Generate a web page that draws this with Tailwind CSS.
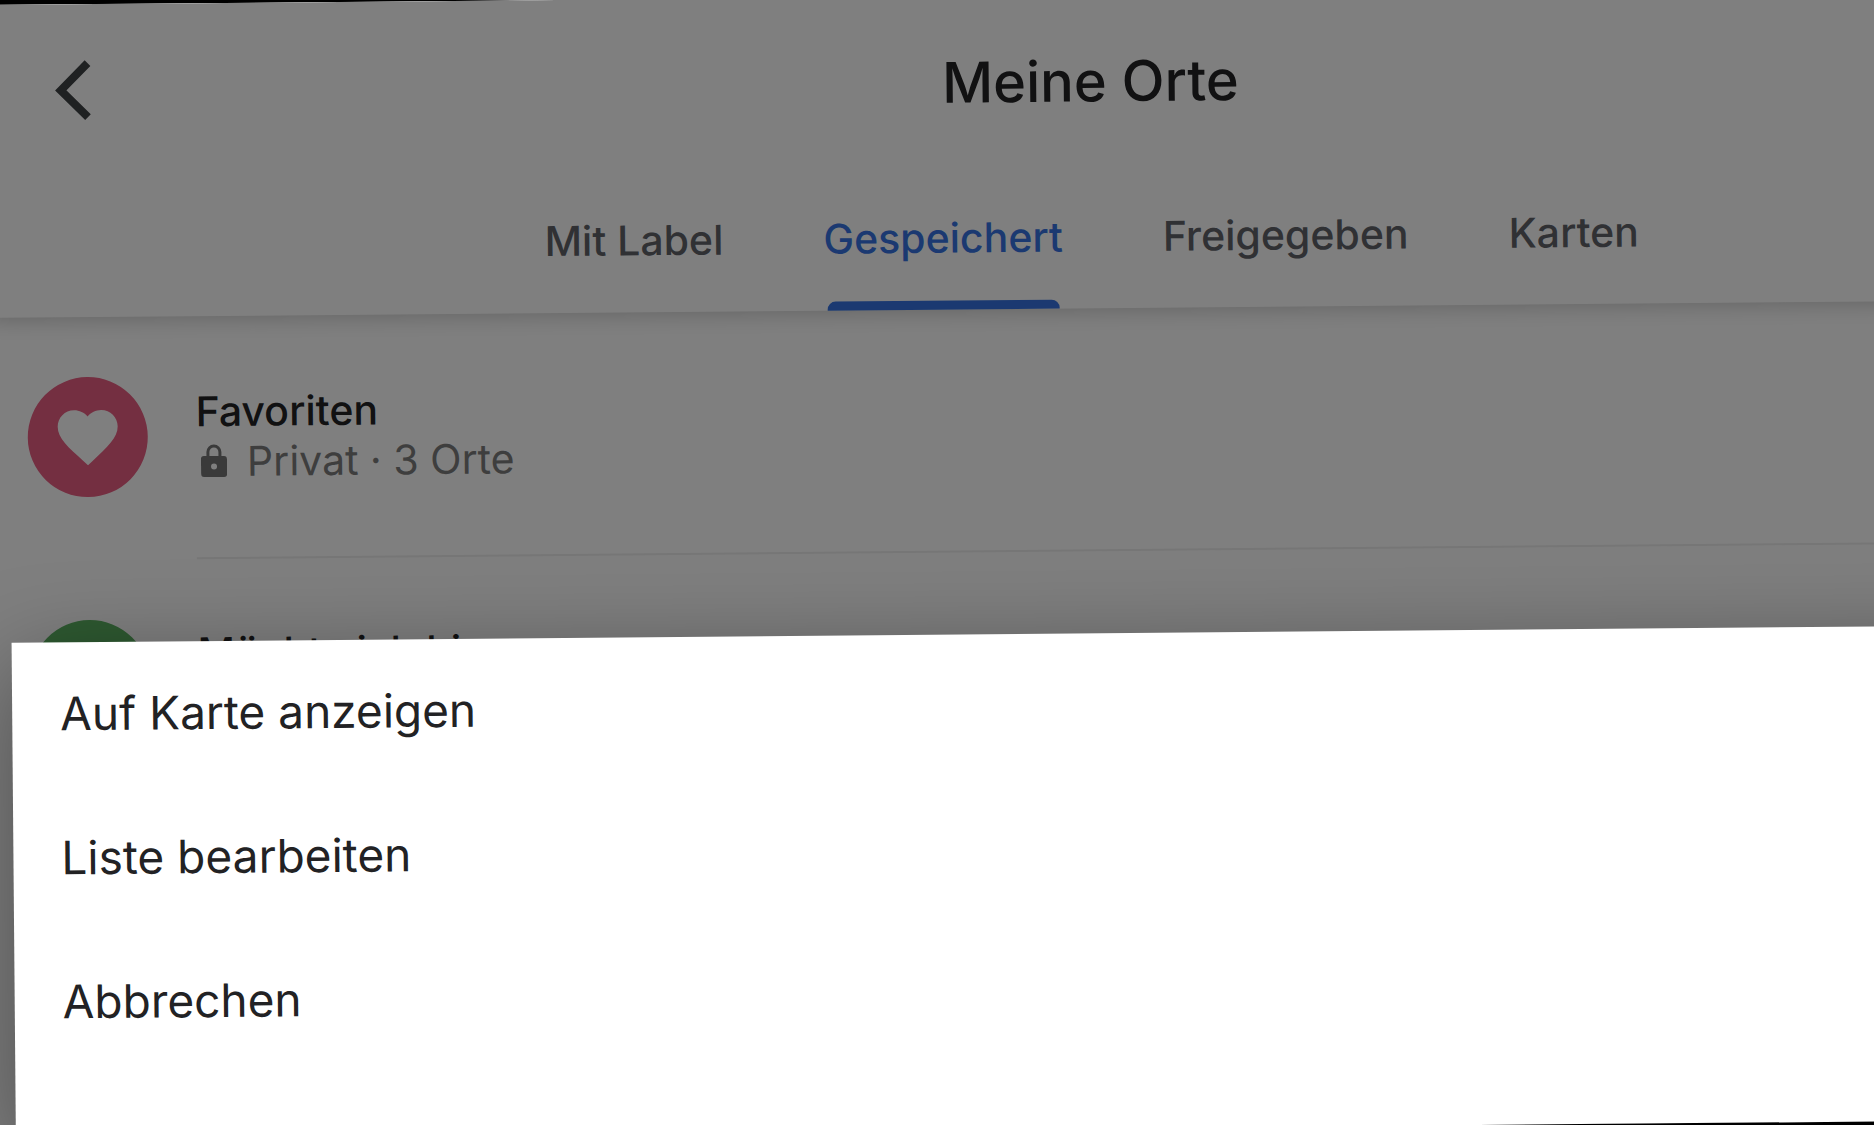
<!DOCTYPE html>
<html lang="de">
<head>
    <meta charset="UTF-8">
    <meta name="viewport" content="width=device-width, initial-scale=1.0">
    <title>Meine Orte</title>
    <script src="https://cdn.jsdelivr.net/npm/@tailwindcss/browser@4"></script>
</head>
<body class="bg-black font-['Inter','Liberation_Sans',sans-serif]">
    <div class="h-screen overflow-hidden pt-[5px]">
        <!-- Tilted app screen, runs past the right edge -->
        <div class="relative -ml-4 w-[118%] h-[calc(100%+13px)] origin-top-left rotate-[-0.5deg] bg-white overflow-hidden">
            <!-- Header -->
            <header class="relative h-[313px] flex flex-col bg-white shadow-[0_0_24px_rgba(0,0,0,0.25)]">
                <div class="relative h-[172px] flex items-center justify-center">
                    <button type="button" aria-label="Zurück" class="absolute left-[68px] top-[53px]">
                        <svg class="w-[40px] h-[64px]" viewBox="0 0 40 64" fill="none" stroke="#3e4244" stroke-width="8">
                            <path d="M35 6 L8 33 L35 60" />
                        </svg>
                    </button>
                    <h1 class="text-[56px] leading-[72px] font-medium text-[#222224]">Meine Orte</h1>
                </div>
                <nav class="flex-1 flex justify-center gap-[100px] text-[41px] leading-[48px] font-medium text-[#606268]">
                    <a href="#label" class="pt-[45px]">Mit Label</a>
                    <a href="#gespeichert" class="flex flex-col justify-between pt-[45px] text-[#3673e2]">
                        Gespeichert
                        <span class="mx-1 h-[9px] rounded-t-lg bg-[#3673e2]"></span>
                    </a>
                    <a href="#freigegeben" class="pt-[45px]">Freigegeben</a>
                    <a href="#karten" class="pt-[45px]">Karten</a>
                </nav>
            </header>

            <!-- Lists -->
            <main>
                <ul>
                    <li class="h-[243px] flex items-start gap-[48px] pl-[40px]">
                        <span class="mt-[60px] size-[120px] shrink-0 flex items-center justify-center rounded-full bg-[#e85e82]">
                            <svg class="size-[72px]" viewBox="0 0 24 24" fill="#fff">
                                <path d="M12 21.35l-1.45-1.32C5.4 15.36 2 12.28 2 8.5 2 5.42 4.42 3 7.5 3c1.74 0 3.41.81 4.5 2.09C13.09 3.81 14.76 3 16.5 3 19.58 3 22 5.42 22 8.5c0 3.78-3.4 6.86-8.55 11.54L12 21.35z" />
                            </svg>
                        </span>
                        <div class="h-full flex-1 flex flex-col justify-center pb-[2px] border-b-2 border-[#ececec]">
                            <h2 class="text-[41px] leading-[50px] font-medium text-[#222224]">Favoriten</h2>
                            <p class="flex items-center gap-[20px] pl-[5px] text-[41px] leading-[50px] text-[#7c7c7c]">
                                <svg class="w-[26px] h-[34px]" viewBox="0 0 26 34" fill="none">
                                    <path d="M7 13 V8 a6 6 0 0 1 12 0 V13" stroke="#747474" stroke-width="3" />
                                    <path fill-rule="evenodd" fill="#747474" d="M3 12 H23 a3 3 0 0 1 3 3 V30 a3 3 0 0 1 -3 3 H3 a3 3 0 0 1 -3 -3 V15 a3 3 0 0 1 3 -3 Z M13 19.500 a3 3 0 1 0 0 6 a3 3 0 1 0 0 -6 Z" />
                                </svg>
                                Privat · 3 Orte
                            </p>
                        </div>
                    </li>
                    <li class="h-[243px] flex items-start gap-[48px] pl-[40px]">
                        <span class="mt-[60px] size-[120px] shrink-0 rounded-full bg-[#5cb263]"></span>
                        <div class="h-full flex-1 flex flex-col justify-center border-b-2 border-[#ececec]">
                            <h2 class="pb-[56px] text-[41px] leading-[50px] font-medium text-[#222224]">Möchte ich hin</h2>
                        </div>
                    </li>
                </ul>
            </main>

            <!-- Dimmed backdrop -->
            <div class="absolute inset-0 bg-black/50"></div>

            <!-- Action sheet -->
            <div role="menu" class="absolute bottom-0 left-[22px] right-[22px] flex flex-col pb-[63px] bg-white shadow-[0_24px_96px_rgba(0,0,0,0.38)]">
                <button type="button" role="menuitem" class="h-[144px] pb-[2px] pl-[48px] text-left text-[46px] leading-[56px] text-[#222224]">Auf Karte anzeigen</button>
                <button type="button" role="menuitem" class="h-[144px] pb-[2px] pl-[48px] text-left text-[46px] leading-[56px] text-[#222224]">Liste bearbeiten</button>
                <button type="button" role="menuitem" class="h-[144px] pb-[2px] pl-[48px] text-left text-[46px] leading-[56px] text-[#222224]">Abbrechen</button>
            </div>
        </div>
    </div>
</body>
</html>
